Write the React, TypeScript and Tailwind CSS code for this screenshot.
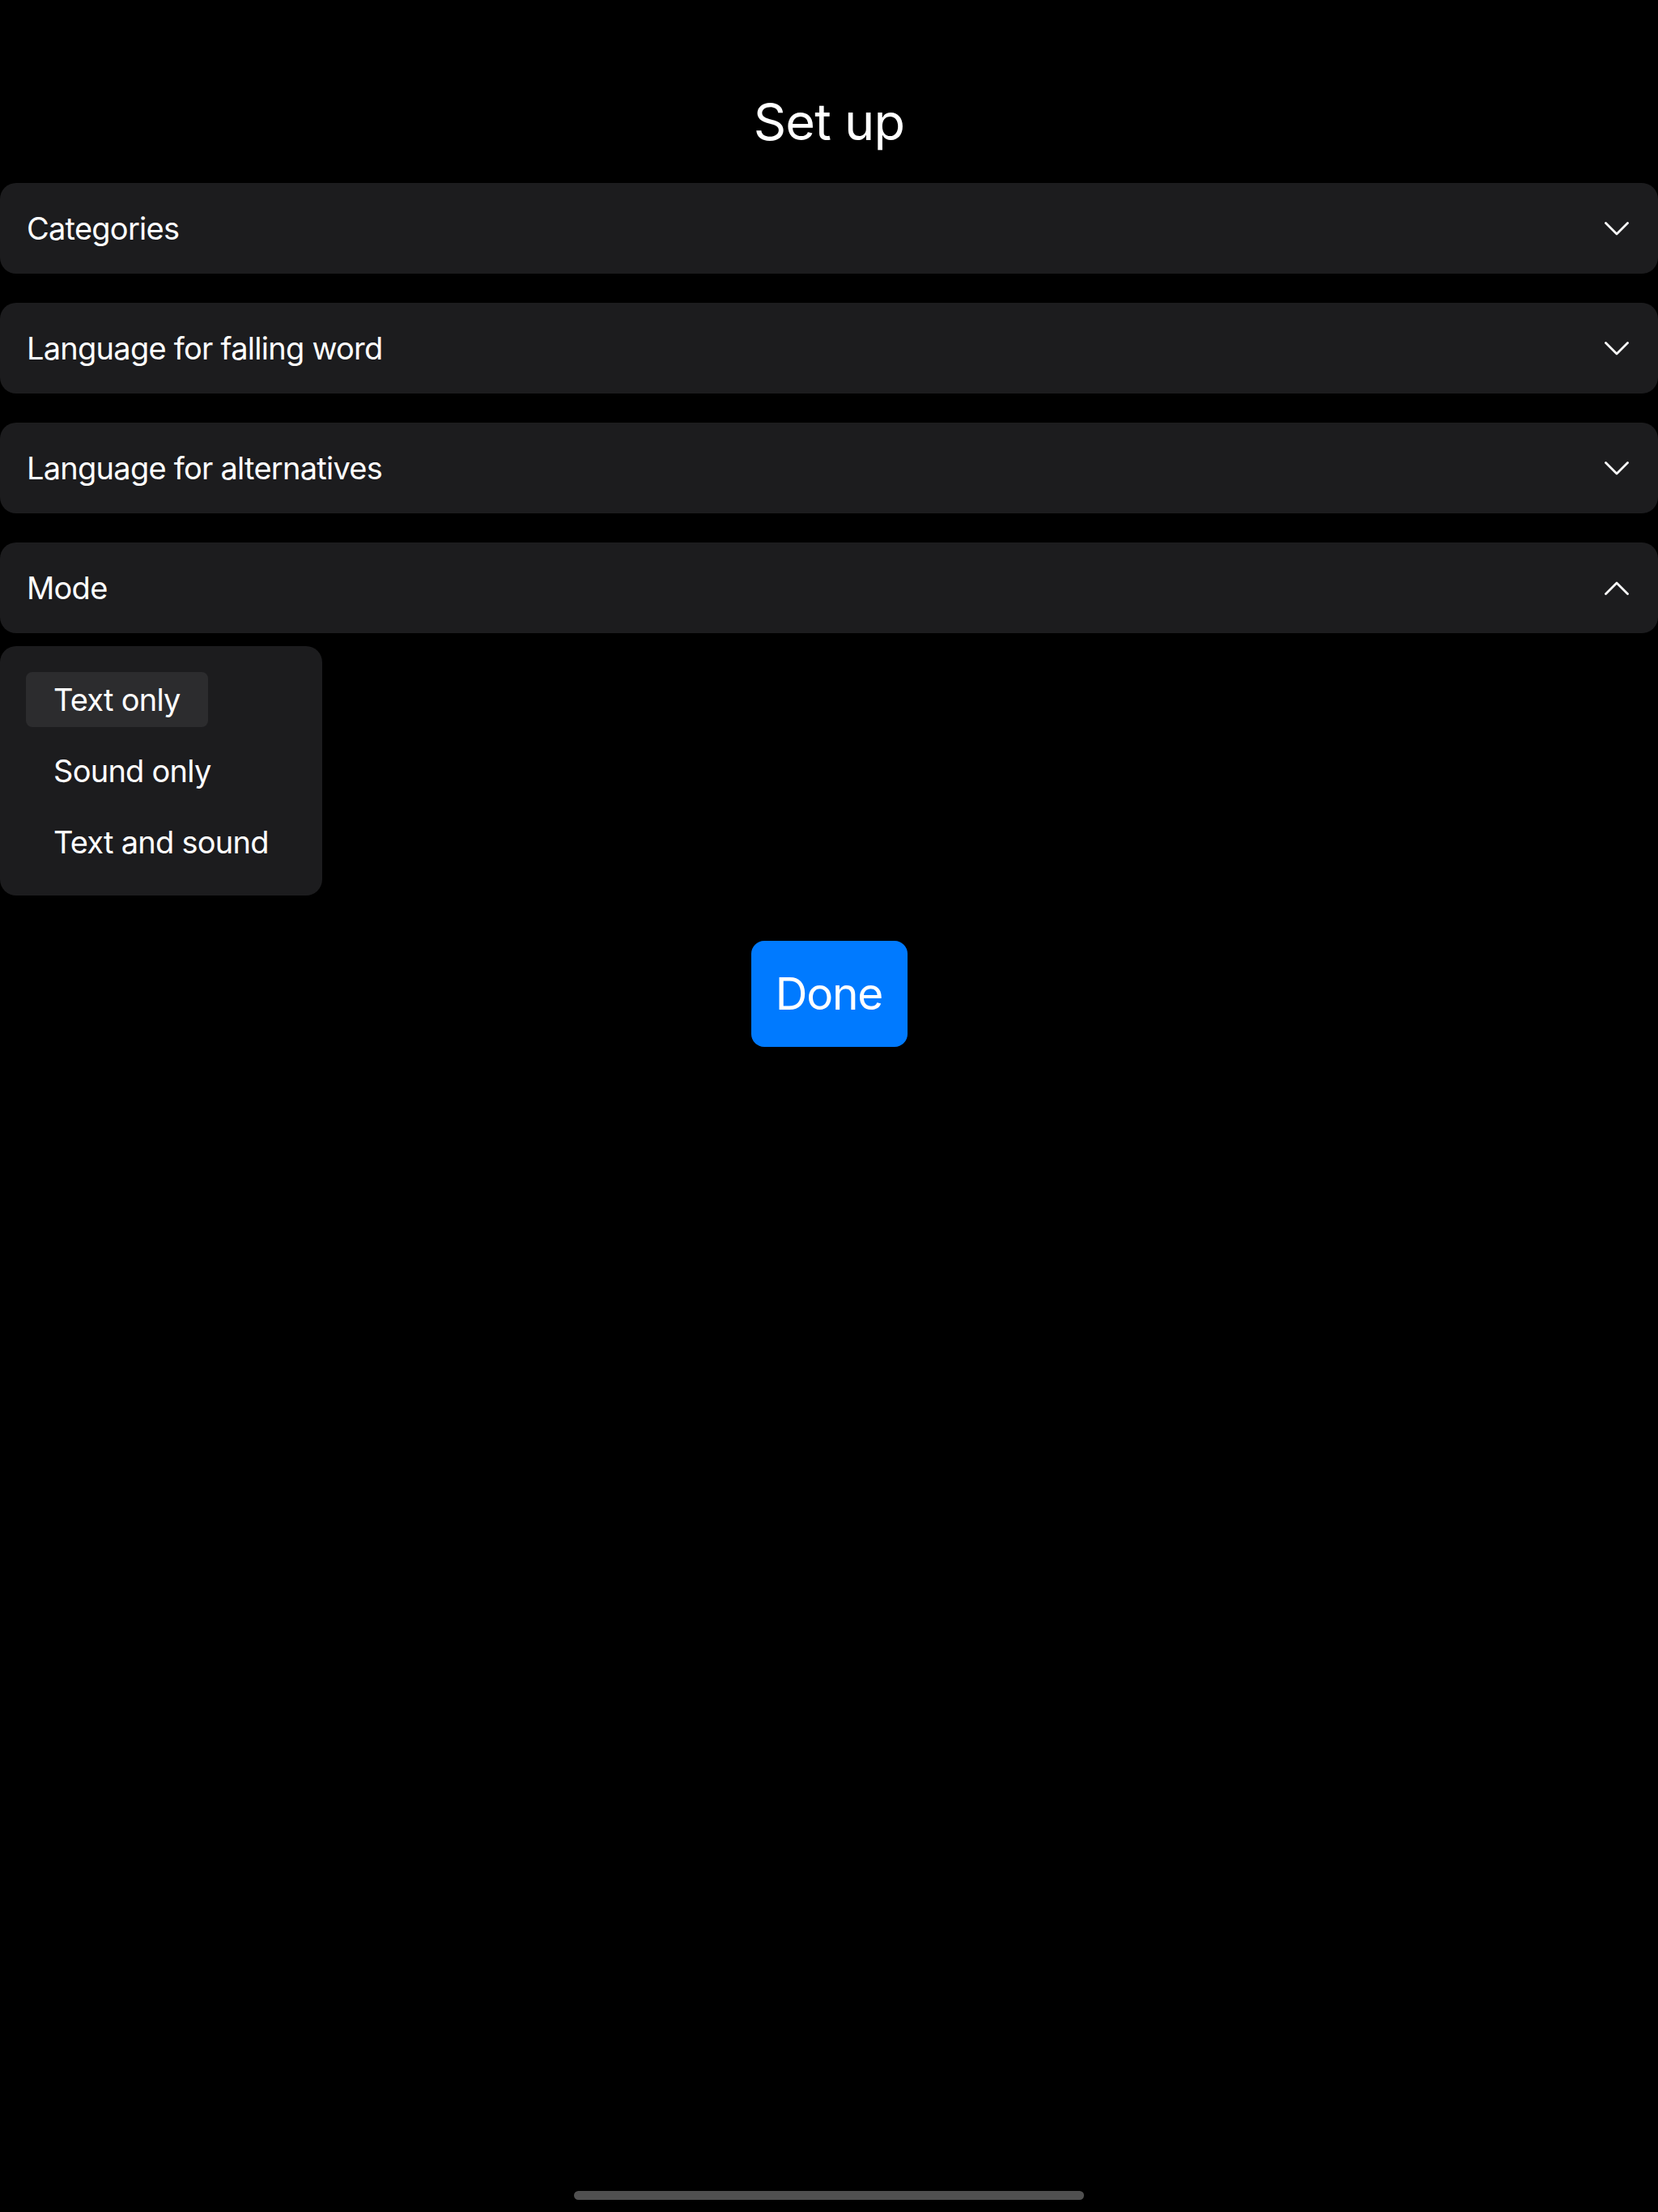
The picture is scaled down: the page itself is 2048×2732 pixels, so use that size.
const SECTIONS = [
  { title: "Categories", open: false },
  { title: "Language for falling word", open: false },
  { title: "Language for alternatives", open: false },
  { title: "Mode", open: true },
];

const MODES = ["Text only", "Sound only", "Text and sound"];

function Chevron({ up }: { up: boolean }) {
  return (
    <svg width="30" height="17" viewBox="0 0 30 17" fill="none" className="shrink-0">
      <polyline
        points={up ? "1.5,15.5 15,2 28.5,15.5" : "1.5,1.5 15,15 28.5,1.5"}
        stroke="white"
        strokeWidth="2.8"
        strokeLinecap="round"
        strokeLinejoin="round"
      />
    </svg>
  );
}

function SectionHeader({ title, open }: { title: string; open: boolean }) {
  return (
    <div className="flex h-[112px] w-full items-center justify-between rounded-[20px] bg-[#1c1c1e] pl-[33px] pr-[36px]">
      <span className="text-[38px] leading-none tracking-[-0.75px] text-white">{title}</span>
      <Chevron up={open} />
    </div>
  );
}

export default function App() {
  const selected = "Text only";
  return (
    <div className="flex min-h-screen flex-col bg-black font-['Inter','Liberation_Sans',sans-serif] text-white">
      <h1 className="pt-[112px] text-center text-[63px] font-normal leading-[76px] tracking-[-0.8px]">
        Set up
      </h1>

      <div className="mt-[38px] flex flex-col gap-[36px]">
        {SECTIONS.map((s) => (
          <SectionHeader key={s.title} title={s.title} open={s.open} />
        ))}
      </div>

      {/* open menu for "Mode" */}
      <div className="mt-[16px] flex w-fit flex-col gap-[20px] rounded-[20px] bg-[#1c1c1e] p-[32px]">
        {MODES.map((m) => (
          <div
            key={m}
            className={
              m === selected
                ? "flex h-[68px] w-fit items-center rounded-[8px] bg-[#2c2c2e] px-[34px]"
                : "flex h-[68px] w-fit items-center rounded-[8px] px-[34px]"
            }
          >
            <span className="text-[38px] leading-none tracking-[-0.75px]">{m}</span>
          </div>
        ))}
      </div>

      <div className="mt-[56px] flex justify-center">
        <button className="flex h-[131px] w-[193px] items-center justify-center rounded-[16px] bg-[#007aff] text-[55px] leading-none tracking-[-1.2px] text-white">
          Done
        </button>
      </div>

      <div className="mt-auto flex justify-center pb-[15px]">
        <div className="h-[11px] w-[630px] rounded-full bg-[#505050]" />
      </div>
    </div>
  );
}
